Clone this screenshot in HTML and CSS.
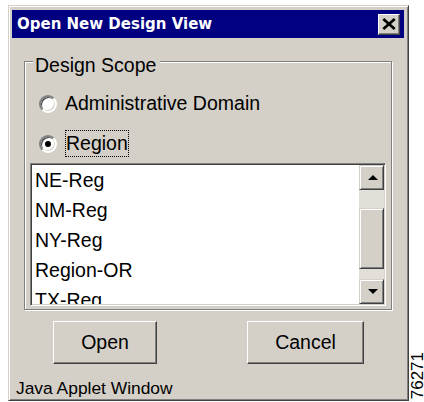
FILE: index.html
```html
<!DOCTYPE html>
<html lang="en">
<head>
<meta charset="utf-8">
<title>Open New Design View</title>
<link rel="stylesheet" href="styles.css">
</head>
<body>
  <div class="window">
    <div class="titlebar">
      <span class="title">Open New Design View</span>
      <button class="close" type="button" aria-label="Close">
        <svg width="14" height="12" viewBox="0 0 14 12"><path d="M1.3 1 L12.7 11 M12.7 1 L1.3 11" stroke="#000" stroke-width="2.7" fill="none"/></svg>
      </button>
    </div>

    <fieldset class="group">
      <legend>Design Scope</legend>
      <label class="radio"><span class="radio-mark"></span><span class="radio-text">Administrative Domain</span></label>
      <label class="radio"><span class="radio-mark is-checked"></span><span class="radio-text has-focus">Region</span></label>

      <div class="list">
        <ul class="items">
          <li>NE-Reg</li>
          <li>NM-Reg</li>
          <li>NY-Reg</li>
          <li>Region-OR</li>
          <li>TX-Reg</li>
        </ul>
        <div class="scrollbar">
          <div class="sb-btn">
            <svg width="10" height="5" viewBox="0 0 10 5"><path d="M0 5 L5 0 L10 5 Z" fill="#000"/></svg>
          </div>
          <div class="sb-track"><div class="sb-thumb"></div></div>
          <div class="sb-btn">
            <svg width="10" height="5" viewBox="0 0 10 5"><path d="M0 0 L10 0 L5 5 Z" fill="#000"/></svg>
          </div>
        </div>
      </div>
    </fieldset>

    <div class="actions">
      <button class="btn btn-open" type="button">Open</button>
      <button class="btn btn-cancel" type="button">Cancel</button>
    </div>

    <div class="status">Java Applet Window</div>
  </div>

  <div class="fig-id">76271</div>
</body>
</html>
```

FILE: styles.css
```css
* {
  box-sizing: border-box;
}

body {
  margin: 0;
  height: 402px;
  overflow: hidden;
  background: #fff;
  display: flex;
  align-items: flex-start;
  font-family: "Liberation Sans", Arial, sans-serif;
  font-size: 19.5px;
  color: #000;
}

/* dialog frame */
.window {
  width: 401px;
  height: 396px;
  margin: 5px 0 0 8px;
  padding: 4px 4px 0 3px;
  background: #d4d0c8;
  border: 1px solid;
  border-color: #d4d0c8 #404040 #404040 #d4d0c8;
  box-shadow: inset 1px 1px #fff, inset -1px -1px #808080;
  display: flex;
  flex-direction: column;
}

.titlebar {
  height: 28px;
  flex: none;
  background: #000080;
  display: flex;
  align-items: center;
  justify-content: space-between;
  padding: 0 4px 0 5px;
}

.title {
  font-family: "DejaVu Sans", sans-serif;
  font-weight: bold;
  font-size: 15px;
  color: #fff;
}

.close {
  width: 22px;
  height: 21px;
  padding: 0;
  margin: 0;
  background: #d4d0c8;
  border: 1px solid;
  border-color: #fff #404040 #404040 #fff;
  box-shadow: inset -1px -1px #808080;
  display: flex;
  align-items: center;
  justify-content: center;
}

.close svg {
  display: block;
}

/* etched group box */
.group {
  margin: 9px 12px 0;
  padding: 15px 5px 3px;
  min-width: 0;
  border: 1px solid #808080;
  box-shadow: inset 1px 1px #fff, 1px 1px #fff;
}

.group legend {
  margin-left: 3px;
  padding: 8px 4px 0 2px;
  line-height: 20px;
  background: #d4d0c8;
}

.radio {
  display: flex;
  align-items: center;
  gap: 8px;
  height: 27px;
  line-height: 27px;
  margin-left: 9px;
}

.radio + .radio {
  margin-top: 13px;
}

.radio-mark {
  width: 18px;
  height: 18px;
  flex: none;
  border-radius: 50%;
  background: #fff;
  border: 2px solid;
  border-color: #808080 #fff #fff #808080;
  box-shadow: inset 1px 1px #404040, inset -1px -1px #d4d0c8;
  display: flex;
  align-items: center;
  justify-content: center;
}

.radio-mark.is-checked::after {
  content: "";
  width: 6px;
  height: 6px;
  border-radius: 50%;
  background: #000;
}

.radio-text {
  white-space: nowrap;
}

.radio-text.has-focus {
  display: inline-block;
  line-height: 25px;
  border: 1px dotted #000;
}

/* sunken list with scrollbar */
.list {
  margin-top: 6px;
  height: 143px;
  display: flex;
  padding: 1px;
  background: #fff;
  border: 1px solid;
  border-color: #808080 #fff #fff #808080;
  box-shadow: inset 1px 1px #404040, inset -1px -1px #d4d0c8;
}

.items {
  flex: 1;
  margin: 0;
  padding: 0 0 0 3px;
  list-style: none;
  overflow: hidden;
}

.items li {
  height: 30px;
  line-height: 30px;
  white-space: nowrap;
}

.scrollbar {
  width: 25px;
  flex: none;
  display: flex;
  flex-direction: column;
}

.sb-btn,
.sb-thumb {
  background: #d4d0c8;
  border: 1px solid;
  border-color: #d4d0c8 #404040 #404040 #d4d0c8;
  box-shadow: inset 1px 1px #fff, inset -1px -1px #808080;
}

.sb-btn {
  height: 25px;
  flex: none;
  display: flex;
  align-items: center;
  justify-content: center;
  padding-left: 2px;
}

.sb-btn svg {
  display: block;
}

.sb-track {
  flex: 1;
  background: #e2dfd9;
  padding-top: 18px;
}

.sb-thumb {
  height: 61px;
}

/* dialog buttons */
.actions {
  display: flex;
  gap: 90px;
  margin: 11px 0 0 41px;
}

.btn {
  height: 43px;
  padding: 0;
  font: inherit;
  color: #000;
  background: #d4d0c8;
  border: 1px solid;
  border-color: #fff #404040 #404040 #fff;
  box-shadow: inset -1px -1px #808080;
}

.btn-open {
  width: 104px;
}

.btn-cancel {
  width: 117px;
}

.status {
  margin: 14px 0 0 4px;
  font-size: 17.4px;
  line-height: 20px;
}

/* figure number printed sideways beside the dialog */
.fig-id {
  margin: 352px 0 0 2px;
  writing-mode: vertical-rl;
  transform: rotate(180deg);
  font-size: 17px;
  line-height: 13px;
  white-space: nowrap;
}
```
